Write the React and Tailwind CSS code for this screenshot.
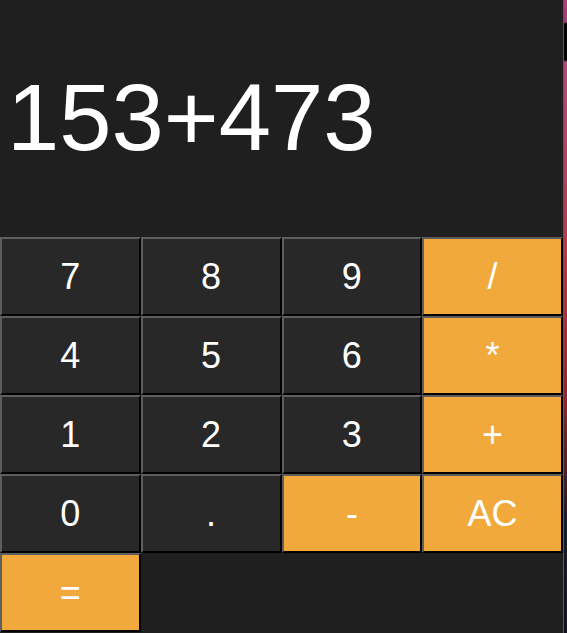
import React from "react";

const keys = [
  ["7", "n"], ["8", "n"], ["9", "n"], ["/", "o"],
  ["4", "n"], ["5", "n"], ["6", "n"], ["*", "o"],
  ["1", "n"], ["2", "n"], ["3", "n"], ["+", "o"],
  ["0", "n"], [".", "n"], ["-", "o"], ["AC", "o"],
  ["=", "o"],
];

export default function App() {
  return (
    <div className="flex h-[633px] w-[567px] bg-[#1f1f1f] overflow-hidden" style={{ fontFamily: '"Liberation Sans", Arial, sans-serif' }}>
      <div className="w-[563px] shrink-0 flex flex-col bg-[#1f1f1f]">
        <div className="h-[237px] flex items-center text-white text-[94px] leading-[1.15] pl-[7px]">
          153+473
        </div>
        <div className="flex flex-wrap">
          {keys.map(([k, t]) => (
            <button
              key={k}
              className={`w-1/4 h-[79px] flex items-center justify-center text-white text-[36px] border-2 border-t-[#5e5e5e] border-l-[#5e5e5e] border-b-black border-r-black ${t === "o" ? "bg-[#f1a93c]" : "bg-[#282828]"}`}
            >
              {k}
            </button>
          ))}
        </div>
      </div>
      <div className="w-[1px] shrink-0 bg-[#5a5a5a]" />
      <div className="w-[3px] shrink-0 bg-[linear-gradient(to_bottom,#b0407f_0px,#a03a7a_22px,#000_24px,#000_60px,#b04a7a_62px,#b03a4a_250px,#8a2a30_400px,#1a1a2a_520px,#101020_633px)]" />
    </div>
  );
}
